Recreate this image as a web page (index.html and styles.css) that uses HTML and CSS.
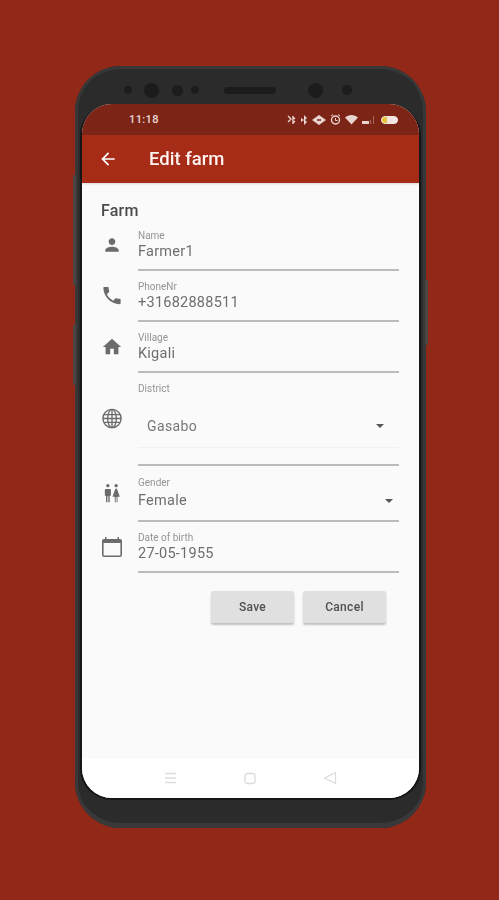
FILE: index.html
```html
<!DOCTYPE html>
<html lang="en">
<head>
    <meta charset="UTF-8">
    <meta name="viewport" content="width=device-width, initial-scale=1.0">
    <title>Edit farm</title>
    <link rel="stylesheet" href="styles.css">
</head>
<body>
    <div class="phone">
        <span class="side-btn side-left-1"></span>
        <span class="side-btn side-left-2"></span>
        <span class="side-btn side-right"></span>
        <div class="bezel-top">
            <span class="dot dot-sm"></span>
            <span class="dot dot-lg"></span>
            <span class="dot dot-md"></span>
            <span class="dot dot-sm2"></span>
            <span class="speaker"></span>
            <span class="dot dot-lg2"></span>
            <span class="dot dot-md2"></span>
        </div>
        <div class="screen">
            <div class="statusbar">
                <span class="clock">11:18</span>
                <div class="status-icons">
                    <svg width="9" height="10" viewBox="0 0 9 10"><path d="M1 1l3 3-3 3M6 1v8M6 2l2 2M6 8l2-2" fill="none" stroke="#e9d5d0" stroke-width="1.400"/></svg>
                    <svg width="8" height="10" viewBox="0 0 8 10"><path d="M4 0l3 3-2 2 2 2-3 3V0zM1 3l3 2-3 2" fill="#e9d5d0"/></svg>
                    <svg width="14" height="10" viewBox="0 0 14 10"><path d="M7 0l7 5-7 5-7-5z" fill="#e9d5d0"/><path d="M5 5h4" stroke="#7c2415" stroke-width="1.400"/></svg>
                    <svg width="11" height="11" viewBox="0 0 11 11"><circle cx="5.500" cy="6" r="4" fill="none" stroke="#e9d5d0" stroke-width="1.400"/><path d="M5.500 4v2.500h2M1 2l2-1.500M10 2L8 .5" fill="none" stroke="#e9d5d0"/></svg>
                    <svg width="13" height="11" viewBox="0 0 13 11"><path d="M0 3.500C3.500 0 9.500 0 13 3.500L6.500 10.500z" fill="#e9d5d0"/></svg>
                    <svg width="12" height="8" viewBox="0 0 12 8"><path d="M0 5h7v3H0z" fill="#e9d5d0"/><path d="M8 4h1v4H8zM11 0h1v8h-1z" fill="#a5695d"/></svg>
                    <span class="battery"><span class="battery-level"></span></span>
                </div>
            </div>
            <div class="appbar">
                <svg class="back" width="20" height="20" viewBox="0 0 24 24"><path d="M20 11H7.830l5.590-5.590L12 4l-8 8 8 8 1.410-1.410L7.830 13H20v-2z" fill="#fff"/></svg>
                <span class="appbar-title">Edit farm</span>
            </div>
            <div class="content">
                <h2 class="section-title">Farm</h2>

                <div class="row">
                    <svg class="icon" width="20" height="20" viewBox="0 0 24 24"><path d="M12 12c2.210 0 4-1.790 4-4s-1.790-4-4-4-4 1.790-4 4 1.790 4 4 4zm0 2c-2.670 0-8 1.340-8 4v2h16v-2c0-2.660-5.330-4-8-4z"/></svg>
                    <div class="field">
                        <label>Name</label>
                        <div class="value">Farmer1</div>
                    </div>
                </div>

                <div class="row">
                    <svg class="icon" width="23" height="23" viewBox="0 0 24 24"><path d="M6.620 10.790c1.440 2.830 3.760 5.140 6.590 6.590l2.200-2.200c.27-.27.670-.36 1.020-.24 1.120.37 2.330.57 3.570.57.550 0 1 .45 1 1V20c0 .55-.45 1-1 1-9.390 0-17-7.610-17-17 0-.55.45-1 1-1h3.500c.55 0 1 .45 1 1 0 1.250.2 2.450.57 3.570.11.350.03.740-.25 1.020l-2.200 2.200z"/></svg>
                    <div class="field">
                        <label>PhoneNr</label>
                        <div class="value">+31682888511</div>
                    </div>
                </div>

                <div class="row">
                    <svg class="icon" width="22" height="22" viewBox="0 0 24 24"><path d="M10 20v-6h4v6h5v-8h3L12 3 2 12h3v8z"/></svg>
                    <div class="field">
                        <label>Village</label>
                        <div class="value">Kigali</div>
                    </div>
                </div>

                <div class="row row-district">
                    <svg class="icon icon-line" width="23" height="23" viewBox="0 0 24 24"><circle cx="12" cy="12" r="9.500"/><ellipse cx="12" cy="12" rx="4.500" ry="9.500"/><path d="M12 2.500v19M3.500 8h17M3.500 16h17M2.500 12h19"/></svg>
                    <div class="field">
                        <label>District</label>
                        <div class="select-inner">
                            <span class="select-value">Gasabo</span>
                            <span class="caret"></span>
                        </div>
                    </div>
                </div>

                <div class="row row-gender">
                    <svg class="icon" width="22" height="22" viewBox="0 0 24 24"><circle cx="7.500" cy="4" r="1.800"/><circle cx="16.500" cy="4" r="1.800"/><path d="M5.500 7.500h4c.8 0 1.300.5 1.300 1.300V15H9.500v7H8v-6.500H7V22H5.500v-7H4.200V8.800c0-.8.5-1.300 1.300-1.300zM16.500 7c.5 0 .9.300 1.100.8L20.500 16H18v6h-1v-5.500h-1V22h-1v-6h-2.500l2.900-8.200c.2-.5.600-.8 1.100-.8z"/></svg>
                    <div class="field">
                        <label>Gender</label>
                        <div class="value value-select">
                            <span>Female</span>
                            <span class="caret"></span>
                        </div>
                    </div>
                </div>

                <div class="row">
                    <svg class="icon" width="24" height="24" viewBox="0 0 24 24"><path d="M20 4h-1V2h-1.500v2h-11V2H5v2H4C2.900 4 2 4.900 2 6v14c0 1.100.9 2 2 2h16c1.100 0 2-.9 2-2V6c0-1.100-.9-2-2-2zm.4 16.400H3.600V8h16.800v12.400z"/></svg>
                    <div class="field">
                        <label>Date of birth</label>
                        <div class="value">27-05-1955</div>
                    </div>
                </div>

                <div class="actions">
                    <button class="btn">Save</button>
                    <button class="btn">Cancel</button>
                </div>
            </div>
            <div class="navbar">
                <svg width="13" height="12" viewBox="0 0 13 12"><path d="M1 1.500h11M1 6h11M1 10.500h11" stroke="#dcdcdc" stroke-width="1.300"/></svg>
                <svg width="12" height="13" viewBox="0 0 12 13"><rect x="1" y="1.500" width="10" height="10" rx="2.500" fill="none" stroke="#dcdcdc" stroke-width="1.300"/></svg>
                <svg width="14" height="14" viewBox="0 0 14 14"><path d="M12.500 1.500v11L1.500 7z" fill="none" stroke="#dcdcdc" stroke-width="1.200" stroke-linejoin="round"/></svg>
            </div>
        </div>
    </div>
</body>
</html>
```

FILE: styles.css
```css
body {
    margin: 0;
    background: #922918;
    font-family: Roboto, "Liberation Sans", sans-serif;
    height: 900px;
    overflow: hidden;
}
.phone {
    position: relative;
    width: 337px;
    height: 732px;
    margin: 66px 0 0 75px;
    padding: 0 7px 30px;
    background: #2b2b2b;
    border-radius: 46px;
    box-shadow: inset 0 -5px 0 #393939, inset 0 3px 0 #383838, inset 3px 0 0 #383838, inset -3px 0 0 #383838;
    filter: blur(.4px);
}
.side-btn {
    position: absolute;
    width: 3px;
    background: #4a4542;
}
.side-left-1 { left: -2px; top: 109px; height: 110px; }
.side-left-2 { left: -2px; top: 259px; height: 60px; }
.side-right { right: -2px; top: 214px; height: 65px; }
.bezel-top {
    height: 38px;
    display: flex;
    align-items: center;
    padding-top: 10px;
    box-sizing: border-box;
}
.dot {
    background: #1c1c1c;
    border-radius: 50%;
    flex: none;
}
.dot-sm { width: 8px; height: 8px; margin-left: 42px; }
.dot-lg { width: 15px; height: 15px; margin-left: 12px; }
.dot-md { width: 11px; height: 11px; margin-left: 13px; }
.dot-sm2 { width: 8px; height: 8px; margin-left: 8px; }
.speaker { width: 52px; height: 7px; background: #1c1c1c; border-radius: 4px; margin-left: 25px; flex: none; }
.dot-lg2 { width: 15px; height: 15px; margin-left: 32px; }
.dot-md2 { width: 10px; height: 10px; margin-left: 19px; }
.screen {
    height: 694px;
    border-radius: 30px;
    overflow: hidden;
    background: #fafafa;
    display: flex;
    flex-direction: column;
    box-shadow: -2px 1px 0 #161616, 2px 1px 0 #161616, 0 2px 0 #161616;
}
.statusbar {
    height: 31px;
    background: #7c2415;
    display: flex;
    align-items: center;
    justify-content: space-between;
    padding: 0 21px 0 47px;
    flex: none;
}
.clock {
    color: #eadcd8;
    font-size: 11px;
    font-weight: 500;
    letter-spacing: .4px;
}
.status-icons {
    display: flex;
    align-items: center;
    gap: 4px;
}
.battery {
    width: 15px;
    height: 6px;
    margin-left: 3px;
    border: 1.500px solid #f1e6e3;
    border-radius: 4px;
    background: #f1e6e3;
    display: block;
    overflow: hidden;
}
.battery-level {
    display: block;
    width: 5px;
    height: 6px;
    background: #e8c53c;
}
.appbar {
    height: 48px;
    background: #a72c18;
    display: flex;
    align-items: center;
    padding-left: 16px;
    flex: none;
    box-shadow: 0 1px 2px #0002;
    position: relative;
}
.appbar-title {
    color: #fdf3f0;
    font-size: 18.500px;
    font-weight: 500;
    margin-left: 31px;
}
.content {
    flex: 1;
    padding: 20px 20px 0 18px;
}
.section-title {
    margin: 0 0 1px 1px;
    color: #4a4a4a;
    font-size: 16px;
    font-weight: 500;
    line-height: 16px;
    letter-spacing: .2px;
}
.row {
    display: flex;
    align-items: center;
    height: 51px;
}
.row-district { height: 93px; }
.row-gender { height: 56px; }
.icon {
    width: 24px;
    flex: none;
    fill: #6b6b6b;
    margin-right: 14px;
    position: relative;
    top: -1px;
}
.icon-line {
    fill: none;
    stroke: #6b6b6b;
    stroke-width: 1.400;
}
.field {
    flex: 1;
    height: 100%;
    box-sizing: border-box;
    border-bottom: 2px solid #bbb;
    display: flex;
    flex-direction: column;
}
label {
    color: #949494;
    font-size: 10px;
    line-height: 12px;
    height: 12px;
    margin-top: 10px;
}
.value {
    color: #6e6e6e;
    font-size: 14.500px;
    line-height: 18px;
    margin-top: 1px;
    letter-spacing: .25px;
}
.value-select {
    display: flex;
    justify-content: space-between;
    align-items: center;
    padding-right: 6px;
    margin-top: 3px;
}
.row-gender label { margin-top: 11px; }
.select-inner {
    height: 43px;
    margin-top: 1px;
    padding: 8px 15px 0 9px;
    border-bottom: 1px solid #f1f1f1;
    display: flex;
    justify-content: space-between;
    align-items: center;
    color: #777;
    font-size: 14px;
    letter-spacing: .4px;
}
.caret {
    width: 0;
    height: 0;
    border-left: 4.500px solid transparent;
    border-right: 4.500px solid transparent;
    border-top: 4.500px solid #555;
}
.actions {
    display: flex;
    justify-content: flex-end;
    gap: 9px;
    padding: 18px 13px 0 0;
}
.btn {
    width: 83px;
    height: 32px;
    border: 0;
    border-radius: 2px;
    background: #e0e0e0;
    box-shadow: 0 2px 2px #0000003a;
    color: #4f4f4f;
    font-family: inherit;
    font-size: 12px;
    font-weight: 500;
    letter-spacing: .3px;
}
.navbar {
    height: 38px;
    background: #fff;
    flex: none;
    display: flex;
    align-items: center;
    justify-content: center;
    gap: 67px;
    padding-bottom: 1px;
}
```
